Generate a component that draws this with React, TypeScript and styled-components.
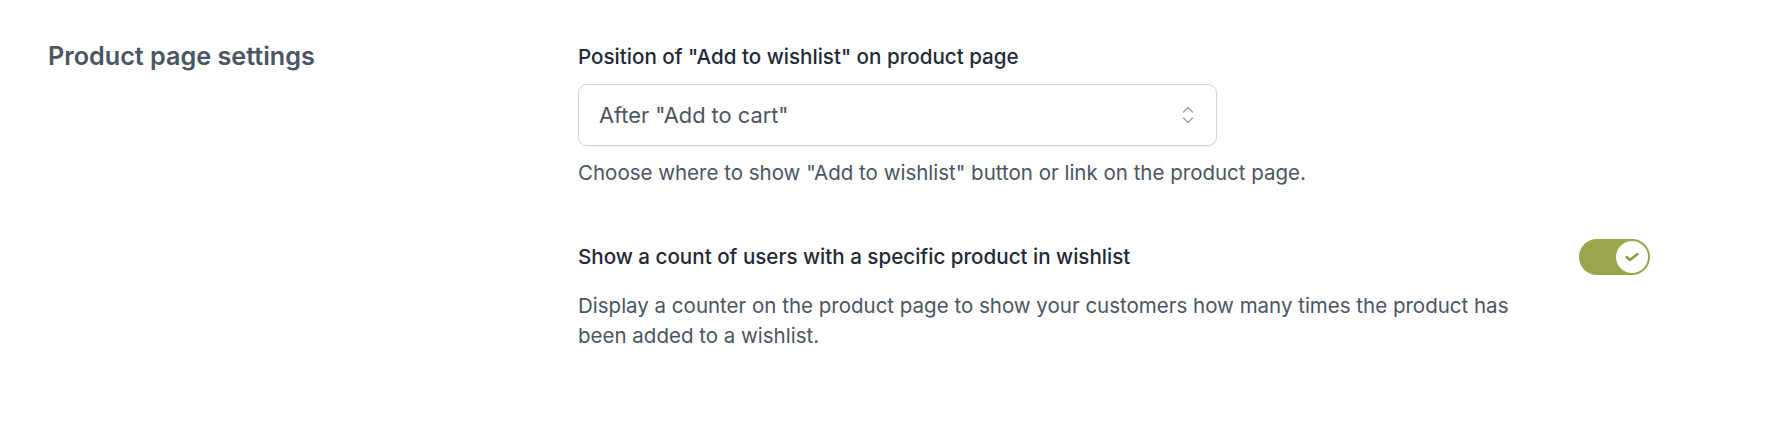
import React from "react";
import styled, { createGlobalStyle } from "styled-components";

const Global = createGlobalStyle`
  html, body { margin: 0; padding: 0; background: #ffffff; }
  body { font-family: Inter, "Noto Sans", "Liberation Sans", sans-serif; -webkit-font-smoothing: antialiased; }
  * { box-sizing: border-box; }
`;

const Page = styled.div`
  display: grid;
  grid-template-columns: 530px 1072px;
  padding: 40px 0 0 48px;
  width: 1776px;
  height: 440px;
  background: #fff;
`;

const SectionTitle = styled.h2`
  margin: 0;
  font-size: 25.2px;
  line-height: 32px;
  font-weight: 600;
  color: #4b5563;
`;

const Settings = styled.div`
  display: flex;
  flex-direction: column;
  gap: 51px;
`;

const Field = styled.div`
  display: flex;
  flex-direction: column;
`;

const Label = styled.label`
  font-size: 20.6px;
  line-height: 34px;
  font-weight: 500;
  color: #1f2937;
`;

const SelectBox = styled.div`
  margin-top: 10px;
  width: 639px;
  height: 62px;
  border: 1px solid #d1d5db;
  border-radius: 9px;
  display: flex;
  align-items: center;
  justify-content: space-between;
  padding: 0 22px 0 20px;
  font-size: 21.8px;
  color: #4b5563;
  box-shadow: 0 1px 2px rgba(0, 0, 0, 0.05);
`;

const Help = styled.p<{ $wide?: boolean }>`
  margin: 12px 0 0;
  font-size: 20.5px;
  line-height: 30px;
  color: #4b5563;
  max-width: ${(p) => (p.$wide ? "970px" : "none")};
`;

const ToggleRow = styled.div`
  display: flex;
  align-items: center;
  justify-content: space-between;
  margin-bottom: 4px;
`;

const Switch = styled.button`
  width: 71px;
  height: 36px;
  border-radius: 18px;
  border: none;
  background: #9ba54b;
  padding: 2px;
  display: flex;
  justify-content: flex-end;
  align-items: center;
  cursor: pointer;
`;

const Knob = styled.span`
  width: 32px;
  height: 32px;
  border-radius: 50%;
  background: #fff;
  display: flex;
  align-items: center;
  justify-content: center;
`;

const Chevrons = () => (
  <svg width="12" height="18" viewBox="0 0 12 18" fill="none" stroke="#9ca3af" strokeWidth="1.5" strokeLinecap="round" strokeLinejoin="round">
    <path d="M1.5 6 L6 1.5 L10.5 6" />
    <path d="M1.5 12 L6 16.5 L10.5 12" />
  </svg>
);

export default function App() {
  return (
    <>
      <Global />
      <Page>
        <SectionTitle>Product page settings</SectionTitle>
        <Settings>
          <Field>
            <Label>Position of "Add to wishlist" on product page</Label>
            <SelectBox>
              <span>After "Add to cart"</span>
              <Chevrons />
            </SelectBox>
            <Help>Choose where to show "Add to wishlist" button or link on the product page.</Help>
          </Field>
          <Field>
            <ToggleRow>
              <Label>Show a count of users with a specific product in wishlist</Label>
              <Switch aria-pressed="true">
                <Knob>
                  <svg width="16" height="16" viewBox="0 0 16 16" fill="none" stroke="#8f9a40" strokeWidth="2.4" strokeLinecap="round" strokeLinejoin="round">
                    <path d="M2.5 8 L6 11 L13.5 5" />
                  </svg>
                </Knob>
              </Switch>
            </ToggleRow>
            <Help $wide>
              Display a counter on the product page to show your customers how many times the product has been added to a wishlist.
            </Help>
          </Field>
        </Settings>
      </Page>
    </>
  );
}
